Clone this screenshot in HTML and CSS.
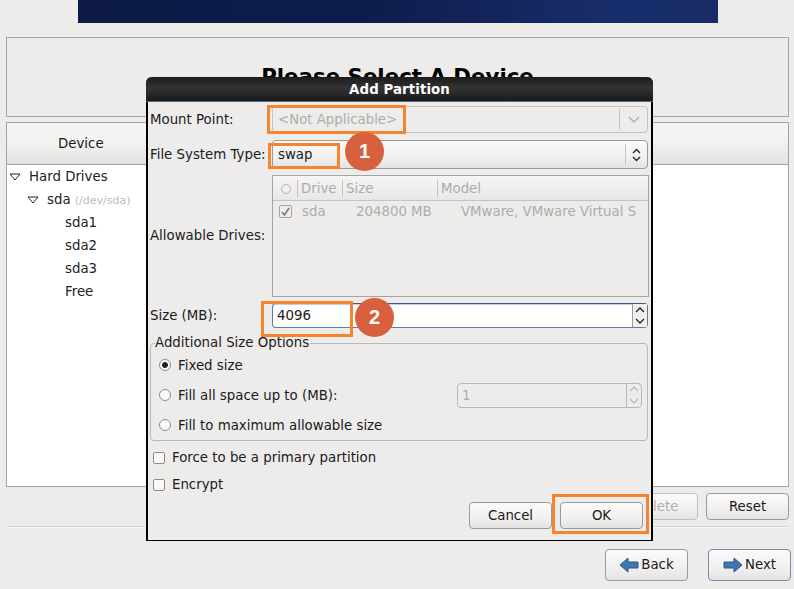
FILE: index.html
```html
<!DOCTYPE html>
<html lang="en">
<head>
    <meta charset="UTF-8">
    <title>Add Partition</title>
    <link rel="stylesheet" href="styles.css">
</head>
<body>
    <div class="banner"></div>

    <div class="title-box">
        <h1>Please Select A Device</h1>
    </div>

    <div class="device-panel">
        <div class="device-head">Device</div>
        <div class="tree">
            <div class="tree-row">
                <svg class="expander" viewBox="0 0 12 8"><path d="M1 1h10L6 7z" fill="none" stroke="#222" stroke-width="1"/></svg>
                <span>Hard Drives</span>
            </div>
            <div class="tree-row level-1">
                <svg class="expander" viewBox="0 0 12 8"><path d="M1 1h10L6 7z" fill="none" stroke="#222" stroke-width="1"/></svg>
                <span>sda <small>(/dev/sda)</small></span>
            </div>
            <div class="tree-row level-2">sda1</div>
            <div class="tree-row level-2">sda2</div>
            <div class="tree-row level-2">sda3</div>
            <div class="tree-row level-2">Free</div>
        </div>
    </div>

    <div class="page-actions">
        <button class="btn btn-off">Delete</button>
        <button class="btn">Reset</button>
    </div>
    <div class="separator"></div>
    <div class="page-nav">
        <button class="btn btn-nav">
            <svg width="20" height="18" viewBox="0 0 20 18"><path d="M1 9 9 2v4h10v6H9v4z" fill="#3f76ae" stroke="#2a5688"/></svg>
            Back
        </button>
        <button class="btn btn-nav btn-default">
            <svg width="20" height="18" viewBox="0 0 20 18"><path d="M19 9 11 2v4H1v6h10v4z" fill="#3f76ae" stroke="#2a5688"/></svg>
            Next
        </button>
    </div>

    <div class="dialog">
        <div class="dialog-title">Add Partition</div>
        <div class="dialog-body">
            <div class="form-row row-mount">
                <label>Mount Point:</label>
                <div class="combo combo-off">
                    <span class="combo-text">&lt;Not Applicable&gt;</span>
                    <span class="combo-arrow">
                        <svg width="12" height="7" viewBox="0 0 12 7"><path d="M1 1l5 5 5-5" fill="none" stroke="#aaa" stroke-width="1.4"/></svg>
                    </span>
                </div>
            </div>
            <div class="form-row row-type">
                <label>File System Type:</label>
                <div class="combo">
                    <span class="combo-text">swap</span>
                    <span class="combo-arrow">
                        <svg width="9" height="14" viewBox="0 0 9 14"><path d="M1 5l3.5-3.5L8 5M1 9l3.5 3.5L8 9" fill="none" stroke="#222" stroke-width="1.3"/></svg>
                    </span>
                </div>
            </div>
            <div class="form-row row-drives">
                <label>Allowable Drives:</label>
                <div class="drive-list">
                    <div class="drive-head">
                        <span class="col-check"><i class="head-circle"></i></span>
                        <span class="col-drive">Drive</span>
                        <span class="col-size">Size</span>
                        <span class="col-model">Model</span>
                    </div>
                    <div class="drive-row">
                        <span class="drive-check">
                            <svg width="11" height="11" viewBox="0 0 11 11"><path d="M2 6l2.5 3L9 2" fill="none" stroke="#777" stroke-width="1.6"/></svg>
                        </span>
                        <span class="cell-drive">sda</span>
                        <span class="cell-size">204800 MB</span>
                        <span class="cell-model">VMware, VMware Virtual S</span>
                    </div>
                </div>
            </div>
            <div class="form-row row-size">
                <label>Size (MB):</label>
                <div class="spin">
                    <span class="spin-text">4096</span>
                    <span class="spin-btns">
                        <svg width="10" height="6" viewBox="0 0 10 6"><path d="M1 5l4-4 4 4" fill="none" stroke="#222" stroke-width="1.3"/></svg>
                        <svg width="10" height="6" viewBox="0 0 10 6"><path d="M1 1l4 4 4-4" fill="none" stroke="#222" stroke-width="1.3"/></svg>
                    </span>
                </div>
            </div>

            <div class="size-frame">
                <div class="legend">Additional Size Options</div>
                <div class="radio-row">
                    <i class="radio radio-on"></i>Fixed size
                </div>
                <div class="radio-row">
                    <i class="radio"></i>Fill all space up to (MB):
                    <div class="spin-off">
                        <span class="spin-text">1</span>
                        <span class="spin-btns">
                            <svg width="10" height="6" viewBox="0 0 10 6"><path d="M1 5l4-4 4 4" fill="none" stroke="#b5b5b5" stroke-width="1.2"/></svg>
                            <svg width="10" height="6" viewBox="0 0 10 6"><path d="M1 1l4 4 4-4" fill="none" stroke="#b5b5b5" stroke-width="1.2"/></svg>
                        </span>
                    </div>
                </div>
                <div class="radio-row">
                    <i class="radio"></i>Fill to maximum allowable size
                </div>
            </div>

            <div class="check-row"><i class="check"></i>Force to be a primary partition</div>
            <div class="check-row"><i class="check"></i>Encrypt</div>

            <div class="dialog-actions">
                <button class="btn">Cancel</button>
                <button class="btn">OK</button>
            </div>
        </div>
    </div>

    <!-- annotations on top of the screenshot -->
    <div class="mark mark-mount"></div>
    <div class="mark mark-type"></div>
    <div class="mark mark-size"></div>
    <div class="mark mark-ok"></div>
    <div class="step step-1">1</div>
    <div class="step step-2">2</div>
</body>
</html>
```

FILE: styles.css
```css
* {
    box-sizing: border-box;
}
html, body {
    height: 100%;
}
body {
    margin: 0;
    background-color: #edeceb;
    font-family: "DejaVu Sans", sans-serif;
    font-size: 13.33px;
    color: #1a1a1a;
    overflow: hidden;
    position: relative;
}
.banner {
    width: 640px;
    height: 23px;
    margin-left: 78px;
    background: linear-gradient(90deg, #0c1a45 0%, #0d1c4b 45%, #182e6c 85%, #172c68 100%);
}
.title-box {
    height: 80px;
    margin: 14px 5px 0 6px;
    border: 1px solid #a5a4a2;
    padding-top: 27px;
    text-align: center;
}
.title-box h1 {
    margin: 0;
    font-size: 21.33px;
    line-height: 24px;
    font-weight: bold;
    color: #000;
}
.device-panel {
    height: 365px;
    margin: 5px 5px 0 6px;
    border: 1px solid #a5a4a2;
    background-color: #fff;
}
.device-head {
    height: 42px;
    line-height: 41px;
    padding-left: 51px;
    border-bottom: 1px solid #a5a4a2;
    background: linear-gradient(#f6f5f4, #f2f1f0 50%, #e3e2e0);
}
.tree-row {
    height: 23px;
    line-height: 23px;
    display: flex;
    align-items: center;
    gap: 8px;
    padding-left: 2px;
    color: #222;
}
.tree-row small {
    font-size: 11px;
    color: #bbb;
}
.expander {
    width: 12px;
    height: 8px;
}
.level-1 {
    padding-left: 20px;
}
.level-2 {
    padding-left: 58px;
}
.page-actions {
    display: flex;
    justify-content: flex-end;
    gap: 8px;
    margin: 6px 5px 0 0;
}
.btn {
    width: 83px;
    height: 27px;
    padding: 0 0 1px;
    border: 1px solid #9c9a97;
    border-radius: 4px;
    background: linear-gradient(#fbfafa, #f1f0ef 60%, #e4e3e1);
    font-family: inherit;
    font-size: 13.33px;
    color: #1a1a1a;
}
.btn-off {
    color: #b0afad;
    border-color: #c2c1bf;
}
.separator {
    height: 2px;
    margin: 6px 5px 0 6px;
    background-color: #d2d1cf;
    border-bottom: 1px solid #f7f7f6;
}
.page-nav {
    display: flex;
    justify-content: flex-end;
    gap: 20px;
    margin: 21px 3px 0 0;
}
.btn-nav {
    height: 32px;
    display: flex;
    align-items: center;
    justify-content: center;
    gap: 2px;
}
.btn-default {
    border-color: #6f8fb3;
}

.dialog {
    position: absolute;
    left: 146px;
    top: 77px;
    width: 507px;
    height: 464px;
    border: 2px solid #000;
    border-top: none;
    border-bottom-width: 1px;
    border-radius: 6px 6px 0 0;
    background-color: #edeceb;
}
.dialog-title {
    height: 25px;
    margin: 0 -2px;
    border-radius: 6px 6px 0 0;
    border-bottom: 1px solid #4d6b8a;
    background: linear-gradient(#1c1c1c, #333 45%, #1a1a1a);
    color: #fff;
    font-weight: bold;
    letter-spacing: 0.1px;
    line-height: 26px;
    text-align: center;
}
.dialog-body {
    padding: 4px 4px 0 2px;
}
.form-row {
    display: flex;
    align-items: center;
}
.form-row label {
    flex: none;
    width: 122px;
}
.row-type {
    margin-top: 7px;
}
.row-drives {
    margin-top: 6px;
}
.row-drives label {
    padding-bottom: 2px;
}
.row-size {
    margin-top: 6px;
}
.combo {
    flex: none;
    width: 376px;
    height: 29px;
    display: flex;
    align-items: center;
    justify-content: space-between;
    border: 1px solid #9c9a97;
    border-radius: 4px;
    background: linear-gradient(#fbfafa, #f1f0ef 60%, #e4e3e1);
}
.combo-off {
    height: 27px;
    background: #edeceb;
    border-color: #c4c3c1;
    color: #adacaa;
}
.combo-text {
    padding-left: 5px;
}
.combo-arrow {
    width: 28px;
    height: 21px;
    display: flex;
    align-items: center;
    justify-content: center;
    border-left: 1px solid #c4c3c1;
}
.row-type .combo-arrow {
    width: 22px;
}
.drive-list {
    flex: none;
    width: 377px;
    height: 122px;
    border: 1px solid #a5a4a2;
    color: #adacaa;
}
.drive-head {
    height: 25px;
    display: flex;
    align-items: center;
    border-bottom: 1px solid #c4c3c1;
    background: linear-gradient(#f6f5f4, #e9e8e6);
}
.drive-head span {
    height: 17px;
    line-height: 17px;
    padding-left: 3px;
    border-right: 1px solid #c4c3c1;
}
.col-check {
    width: 25px;
    padding-left: 8px !important;
}
.head-circle {
    display: block;
    width: 10px;
    height: 10px;
    margin-top: 4px;
    border: 1px solid #b5b4b2;
    border-radius: 50%;
}
.col-drive {
    width: 45px;
}
.col-size {
    width: 95px;
}
.col-model {
    border-right: none !important;
}
.drive-row {
    height: 21px;
    display: flex;
    align-items: center;
    white-space: nowrap;
    overflow: hidden;
}
.drive-check {
    flex: none;
    width: 13px;
    height: 13px;
    margin-left: 6px;
    display: flex;
    align-items: center;
    justify-content: center;
    border: 1px solid #a5a4a2;
    border-radius: 2px;
}
.cell-drive {
    flex: none;
    width: 64px;
    padding-left: 10px;
}
.cell-size {
    flex: none;
    width: 105px;
}
.spin {
    flex: none;
    width: 376px;
    height: 25px;
    display: flex;
    align-items: stretch;
    justify-content: space-between;
    border: 1px solid #5f7d9f;
    border-top-color: #3f5d80;
    border-radius: 4px;
    background-color: #fff;
    box-shadow: inset 0 1px 0 #b9d0ea;
}
.spin-text {
    padding-left: 4px;
    align-self: center;
}
.spin-btns {
    width: 15px;
    display: flex;
    flex-direction: column;
    align-items: center;
    justify-content: space-around;
    border-left: 1px solid #9c9a97;
    background-color: #f1f0ef;
}
.size-frame {
    position: relative;
    width: 498px;
    height: 98px;
    margin-top: 15px;
    border: 1px solid #b9b8b6;
    border-radius: 4px;
    padding-top: 6px;
}
.legend {
    position: absolute;
    left: 4px;
    top: -9px;
    padding-right: 1px;
    line-height: 16px;
    background-color: #edeceb;
}
.radio-row {
    height: 30px;
    display: flex;
    align-items: center;
    padding-left: 8px;
    gap: 7px;
}
.radio {
    width: 12px;
    height: 12px;
    border: 1px solid #8f8d8a;
    border-radius: 50%;
    background-color: #fafafa;
}
.radio-on {
    background: radial-gradient(circle, #222 0, #222 2.6px, #fafafa 3.2px);
}
.spin-off {
    width: 185px;
    height: 25px;
    margin-left: auto;
    margin-right: 5px;
    display: flex;
    justify-content: space-between;
    border: 1px solid #b9b8b6;
    border-radius: 4px;
    color: #adacaa;
}
.spin-off .spin-btns {
    background: none;
    border-left-color: #b9b8b6;
}
.check-row {
    display: flex;
    align-items: center;
    gap: 7px;
    height: 27px;
    padding-left: 3px;
}
.size-frame + .check-row {
    margin-top: 3px;
}
.check {
    width: 12px;
    height: 12px;
    border: 1px solid #8f8d8a;
    border-radius: 2px;
    background-color: #fafafa;
}
.dialog-actions {
    display: flex;
    justify-content: flex-end;
    gap: 8px;
    margin: 4px 4px 0 0;
}

.mark {
    position: absolute;
    border: 3px solid #f7842c;
}
.mark-mount {
    left: 267px;
    top: 105px;
    width: 139px;
    height: 29px;
}
.mark-type {
    left: 268px;
    top: 143px;
    width: 72px;
    height: 26px;
}
.mark-size {
    left: 261px;
    top: 301px;
    width: 92px;
    height: 36px;
}
.mark-ok {
    left: 552px;
    top: 494px;
    width: 97px;
    height: 40px;
}
.step {
    position: absolute;
    width: 39px;
    height: 39px;
    border-radius: 50%;
    background-color: #d9603f;
    color: #fff;
    font-family: "Liberation Sans", sans-serif;
    font-size: 20px;
    font-weight: bold;
    line-height: 38px;
    text-align: center;
}
.step-1 {
    left: 345px;
    top: 132px;
}
.step-2 {
    left: 355px;
    top: 298px;
}
```
